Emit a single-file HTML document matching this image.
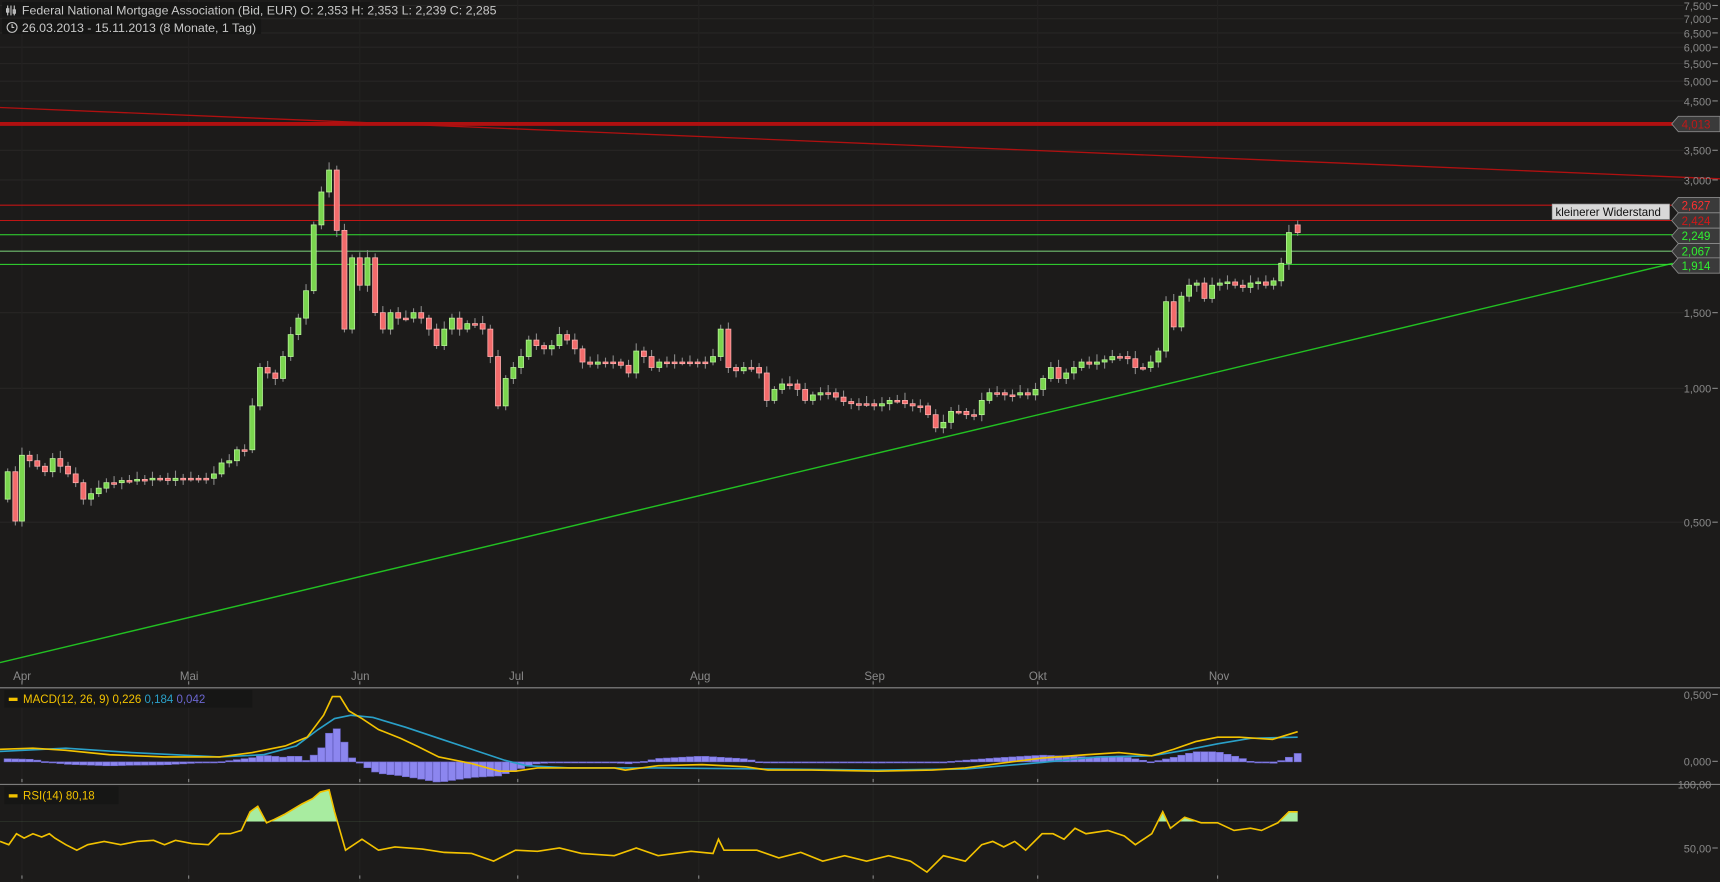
<!DOCTYPE html>
<html><head><meta charset="utf-8"><style>
html,body{margin:0;padding:0;background:#1c1b1a;overflow:hidden}
svg{display:block}
text{font-family:"Liberation Sans",sans-serif}
</style></head><body>
<svg id="s" width="1720" height="882" viewBox="0 0 1568 804" preserveAspectRatio="none" xmlns="http://www.w3.org/2000/svg">
<rect width="1568" height="804" fill="#1c1b1a"/>
<g id="grid" stroke="#272625" stroke-width="1"></g>
<g id="main"></g>
<!-- header -->
<rect x="2" y="2" width="336" height="13" fill="#161615"/>
<rect x="2" y="17" width="236" height="14" fill="#161615"/>
<text x="20" y="13" font-size="11.3" fill="#c8c8c8">Federal National Mortgage Association (Bid, EUR)  O: 2,353  H: 2,353  L: 2,239  C: 2,285</text>
<text x="20" y="29" font-size="11.3" fill="#c8c8c8">26.03.2013 - 15.11.2013 (8 Monate, 1 Tag)</text>
<g stroke="#c8c8c8" fill="none" stroke-width="1"><path d="M7 5v9M10 5v9M13 5v9"/><rect x="6" y="8" width="2" height="3"/><rect x="12" y="9" width="2" height="3"/><circle cx="11" cy="25" r="4.5"/><path d="M11 22v3h2"/></g>
</svg>
<script>
const S=document.getElementById('s'),NS='http://www.w3.org/2000/svg';
function el(t,a,p){const e=document.createElementNS(NS,t);for(const k in a)e.setAttribute(k,a[k]);(p||S).appendChild(e);return e}
const M=document.getElementById('main'),G=document.getElementById('grid');
[5,17,30,43,58,74,92,137,164,285,354,476].forEach(y=>el('line',{x1:0,x2:1535,y1:y,y2:y},G));
[20,172,328,472,637,796,946,1110].forEach(x=>{el('line',{x1:x,x2:x,y1:0,y2:804,stroke:'#232221'},G)});
el('line',{x1:0,y1:98,x2:1568,y2:163,stroke:'#b01010','stroke-width':1.2},M);
el('line',{x1:0,y1:604,x2:1525,y2:240,stroke:'#22c022','stroke-width':1.3},M);
el('line',{x1:0,y1:113,x2:1525,y2:113,stroke:'#b01010','stroke-width':3.5},M);
el('line',{x1:0,y1:187,x2:1525,y2:187,stroke:'#c01515','stroke-width':1},M);
el('line',{x1:0,y1:201,x2:1525,y2:201,stroke:'#c01515','stroke-width':1},M);
el('line',{x1:0,y1:214,x2:1525,y2:214,stroke:'#30e030','stroke-width':1},M);
el('line',{x1:0,y1:229,x2:1525,y2:229,stroke:'#70c070','stroke-width':1},M);
el('line',{x1:0,y1:241,x2:1525,y2:241,stroke:'#30e030','stroke-width':1},M);
const P=[[7,430],[14,475],[20,415],[27,420],[34,425],[41,430],[48,418],[55,425],[62,432],[69,440],[76,455],[83,450],[90,445],[97,440],[104,440],[111,438],[118,438],[125,437],[132,437],[139,436],[146,436],[153,438],[160,436],[167,436],[174,436],[181,436],[188,436],[195,432],[202,422],[209,420],[216,410],[223,410],[230,370],[237,335],[244,340],[251,345],[258,325],[265,305],[272,290],[279,265],[286,205],[293,175],[300,155],[307,210],[314,300],[321,235],[328,260],[335,235],[342,285],[349,300],[356,285],[363,290],[370,290],[377,285],[384,290],[391,300],[398,315],[405,300],[412,290],[419,300],[426,295],[433,295],[440,300],[447,325],[454,370],[461,345],[468,335],[475,325],[482,310],[489,315],[496,318],[503,315],[510,305],[517,310],[524,318],[531,330],[538,332],[545,330],[552,330],[559,330],[566,333],[573,340],[580,320],[587,325],[594,335],[601,330],[608,330],[615,330],[622,330],[629,330],[636,330],[643,330],[650,325],[657,300],[664,335],[671,338],[678,335],[685,335],[692,340],[699,365],[706,355],[713,350],[720,350],[727,355],[734,365],[741,360],[748,358],[755,358],[762,362],[769,366],[776,368],[783,368],[790,368],[797,370],[804,368],[811,365],[818,365],[825,368],[832,370],[839,370],[846,378],[853,390],[860,385],[867,375],[874,375],[881,378],[888,378],[895,365],[902,358],[909,358],[916,360],[923,360],[930,358],[937,360],[944,355],[951,345],[958,335],[965,345],[972,340],[979,335],[986,330],[993,332],[1000,330],[1007,328],[1014,325],[1021,325],[1028,327],[1035,335],[1042,335],[1049,330],[1056,320],[1063,275],[1070,298],[1077,270],[1084,260],[1091,258],[1098,272],[1105,260],[1112,258],[1119,257],[1126,260],[1133,262],[1140,258],[1147,257],[1154,260],[1161,256],[1168,240],[1175,212],[1183,212]];
let prev=455;
P.forEach(([x,c],i)=>{let o=prev;if(i==P.length-1){o=205;c=212}prev=c;
 const bull=c<o, t=Math.min(o,c),b=Math.max(o,c);
 const wt=t-3-((i*7)%5),wb=b+3+((i*5)%4);
 el('line',{x1:x,x2:x,y1:wt,y2:wb,stroke:'#888','stroke-width':1},M);
 el('rect',{x:x-2.3,y:t,width:4.6,height:Math.max(b-t,1.5),fill:bull?'#7ad54e':'#f26b6b',stroke:bull?'#b8f59a':'#ffb0b0','stroke-width':0.7},M);
});
const ax=[[5,'7,500'],[17,'7,000'],[30,'6,500'],[43,'6,000'],[58,'5,500'],[74,'5,000'],[92,'4,500'],[137,'3,500'],[164,'3,000'],[285,'1,500'],[354,'1,000'],[476,'0,500'],[633,'0,500'],[694,'0,000'],[773,'50,00']];
ax.forEach(([y,t])=>{el('text',{x:1560,y:y+4,'font-size':10,fill:'#8a8a8a','text-anchor':'end'},S).textContent=t;el('line',{x1:1561,x2:1566,y1:y,y2:y,stroke:'#8a8a8a'},S)});
[[113,'4,013','#c01818'],[187,'2,627','#ff3030'],[201,'2,424','#d01818'],[215,'2,249','#30f030'],[229,'2,067','#30f030'],[242,'1,914','#30f030']].forEach(([y,t,c])=>{
 el('path',{d:`M1524 ${y} l6 -7 h38 v14 h-38z`,fill:'#3a3a3a',stroke:'#888','stroke-width':0.8},S);
 el('text',{x:1533,y:y+4,'font-size':10.5,fill:c},S).textContent=t;});
el('rect',{x:1415,y:186,width:107,height:14,fill:'#d8d8d8',stroke:'#999','stroke-width':0.6},S);
el('text',{x:1418,y:197,'font-size':10.5,fill:'#111'},S).textContent='kleinerer Widerstand';
[[20,'Apr'],[172,'Mai'],[328,'Jun'],[472,'Jul'],[637,'Aug'],[796,'Sep'],[946,'Okt'],[1110,'Nov']].forEach(([x,t])=>{
 el('text',{x:x-8,y:620,'font-size':10.5,fill:'#8a8a8a'},S).textContent=t;
 [624,713,801].forEach(y=>el('line',{x1:x,x2:x,y1:y-3,y2:y,stroke:'#888'},S));});
el('line',{x1:0,x2:1568,y1:627,y2:627,stroke:'#8a8a8a'},S);
el('line',{x1:0,x2:1568,y1:715,y2:715,stroke:'#8a8a8a'},S);
function interp(pts,x){for(let i=1;i<pts.length;i++)if(x<=pts[i][0]){const[a,b]=pts[i-1],[c,d]=pts[i];return b+(d-b)*(x-a)/(c-a)}return pts[pts.length-1][1]}
const Y=[[0,683],[30,682],[60,684],[100,688],[150,690],[200,690],[230,686],[260,680],[280,672],[295,652],[303,635],[310,635],[318,648],[330,655],[345,665],[365,673],[380,680],[400,690],[430,696],[455,703],[470,703],[490,700],[520,700],[560,700],[570,702],[600,698],[640,697],[680,699],[700,702],[740,702],[800,703],[850,702],[880,700],[910,696],[950,691],[990,688],[1020,686],[1050,689],[1070,683],[1090,676],[1110,672],[1130,672],[1160,674],[1183,667]];
const B=[[0,685],[60,682],[120,686],[200,690],[240,688],[270,680],[290,665],[305,655],[320,652],[340,654],[370,663],[400,673],[430,683],[460,693],[480,698],[520,700],[600,700],[700,701],[800,702],[880,701],[950,695],[1000,690],[1050,689],[1080,684],[1110,678],[1140,673],[1183,672]];
P.forEach(([x])=>{let h=(interp(B,x)-interp(Y,x))*1.1;if(h>0)h*=1.4;const z=694.5;
 el('rect',{x:x-3.3,y:h>0?z-h:z,width:6.6,height:Math.max(Math.abs(h),1),fill:'#8c86ef',stroke:'#6a64c8','stroke-width':0.5},S)});
el('polyline',{points:B.map(p=>p.join(',')).join(' '),fill:'none',stroke:'#2aa0c8','stroke-width':1.5},S);
el('polyline',{points:Y.map(p=>p.join(',')).join(' '),fill:'none',stroke:'#f2c200','stroke-width':1.5},S);
el('rect',{x:4,y:629,width:226,height:16,fill:'#161615'},S);
const mt=el('text',{x:21,y:641,'font-size':10.5,fill:'#f2c200'},S);mt.innerHTML='MACD(12, 26, 9)  0,226  <tspan fill="#2aa0c8">0,184</tspan>  <tspan fill="#6b66d0">0,042</tspan>';
el('rect',{x:8,y:636,width:8,height:3,fill:'#f2c200'},S);
el('text',{x:1560,y:719,'font-size':10,fill:'#8a8a8a','text-anchor':'end'},S).textContent='100,00';
const R=[[0,767],[8,770],[15,760],[22,764],[30,760],[38,763],[45,760],[50,764],[60,770],[70,775],[80,770],[95,767],[110,770],[125,767],[140,766],[150,770],[160,766],[175,769],[190,770],[200,760],[210,760],[220,757],[228,740],[235,735],[243,750],[250,747],[260,742],[275,733],[285,728],[292,722],[300,720],[305,740],[315,775],[330,765],[345,775],[360,772],[385,774],[405,777],[430,778],[450,785],[470,775],[490,776],[510,773],[530,778],[560,780],[580,773],[600,780],[630,776],[650,778],[655,765],[660,775],[690,775],[710,782],[730,777],[750,785],[770,780],[790,785],[810,780],[830,785],[845,795],[860,780],[880,785],[895,770],[905,767],[915,772],[925,767],[935,775],[950,760],[960,760],[970,765],[980,755],[990,760],[1010,757],[1025,762],[1035,770],[1050,760],[1060,740],[1067,755],[1080,745],[1095,750],[1110,750],[1125,757],[1140,755],[1150,757],[1165,750],[1175,740],[1183,740]];
const cpE=el('clipPath',{id:'cp'},S);el('rect',{x:0,y:700,width:1568,height:49},cpE);
el('polygon',{points:'0,749 '+R.map(p=>p.join(',')).join(' ')+' 1183,749',fill:'#a8eca0','clip-path':'url(#cp)'},S);
el('polyline',{points:R.map(p=>p.join(',')).join(' '),fill:'none',stroke:'#f2c200','stroke-width':1.5},S);
el('rect',{x:4,y:717,width:104,height:16,fill:'#161615'},S);
el('text',{x:21,y:729,'font-size':10.5,fill:'#f2c200'},S).textContent='RSI(14)  80,18';
el('rect',{x:8,y:724,width:8,height:3,fill:'#f2c200'},S);
</script>
</body></html>
